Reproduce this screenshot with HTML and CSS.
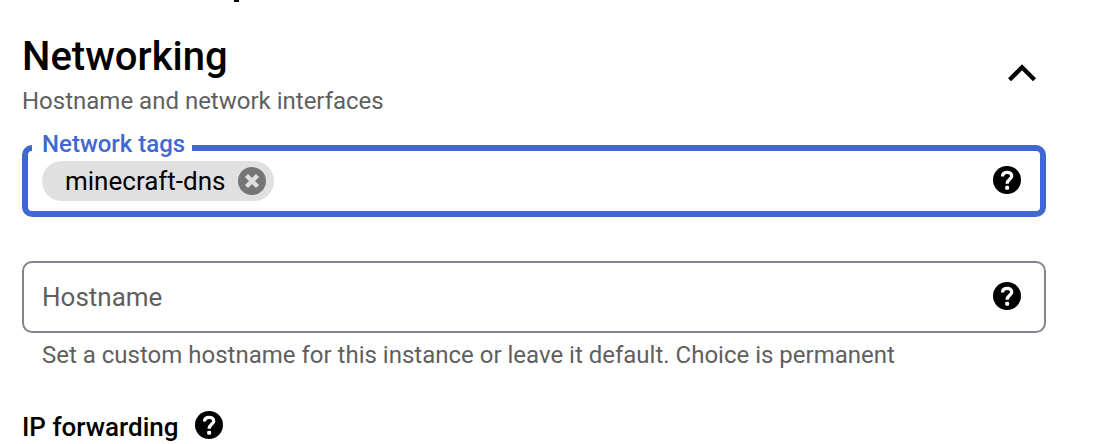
FILE: index.html
```html
<!DOCTYPE html>
<html lang="en">
<head>
<meta charset="utf-8">
<title>Networking</title>
<link rel="stylesheet" href="styles.css">
</head>
<body>
<svg class="symbols" aria-hidden="true">
  <symbol id="help" viewBox="0 0 28 28">
    <circle cx="14" cy="14" r="14" fill="#000"/>
    <path d="M9.5 10.4C9.5 7.8 11.4 6.3 14.1 6.3C16.8 6.3 18.7 7.8 18.7 10.2C18.7 13.3 14.1 13.6 14.1 17.8" fill="none" stroke="#fff" stroke-width="3.3"/>
    <rect x="12.2" y="19.8" width="3.9" height="4" rx="1.4" fill="#fff"/>
  </symbol>
</svg>
<main class="panel">
  <div class="previous"></div>
  <header class="section-header">
    <div>
      <h2 class="title">Networking</h2>
      <p class="subtitle">Hostname and network interfaces</p>
    </div>
    <button class="icon-button" type="button" aria-label="Collapse Networking">
      <svg class="chevron" viewBox="0 0 28 18"><path d="M1.5 15.8L14 3.3L26.5 15.8" fill="none" stroke="#000" stroke-width="4.4"/></svg>
    </button>
  </header>

  <div class="field field-active">
    <label class="floating-label" for="tags">Network tags</label>
    <span class="chip">minecraft-dns
      <button class="icon-button" type="button" aria-label="Remove minecraft-dns">
        <svg class="icon" viewBox="0 0 28 28"><circle cx="14" cy="14" r="14" fill="#757575"/><path d="M8.5 8.5L19.5 19.5M19.5 8.5L8.5 19.5" stroke="#e0e0e0" stroke-width="4.4"/></svg>
      </button>
    </span>
    <input class="input" id="tags" type="text">
    <button class="icon-button field-help" type="button" aria-label="Help for network tags"><svg class="icon"><use href="#help"/></svg></button>
  </div>

  <div class="field">
    <input class="input" id="hostname" type="text" placeholder="Hostname" aria-label="Hostname" aria-describedby="hostname-hint">
    <button class="icon-button field-help" type="button" aria-label="Help for hostname"><svg class="icon"><use href="#help"/></svg></button>
  </div>
  <p class="hint" id="hostname-hint">Set a custom hostname for this instance or leave it default. Choice is permanent</p>

  <div class="forwarding">
    <h3 class="subheading">IP forwarding</h3>
    <button class="icon-button" type="button" aria-label="Help for IP forwarding"><svg class="icon"><use href="#help"/></svg></button>
  </div>
</main>
</body>
</html>
```
FILE: styles.css
```css
* { box-sizing: border-box; }
body {
  margin: 0;
  background: #fff;
  color: #000;
  font-family: Roboto, "Liberation Sans", sans-serif;
  font-size: 26px;
  line-height: 32px;
}
h2, h3, p { margin: 0; }
.symbols { display: none; }
.panel { padding: 0 58px 0 22px; }
.previous {
  width: 5px;
  height: 2px;
  margin-left: 212px;
  background: #000;
}
.section-header {
  display: flex;
  justify-content: space-between;
  align-items: center;
  padding: 31px 10px 0 0;
}
.title {
  font-size: 40px;
  font-weight: 500;
  line-height: 48px;
}
.subtitle, .hint {
  color: #5f5f5f;
  font-size: 24px;
}
.subtitle { padding-top: 4px; }
.icon-button {
  display: flex;
  flex: none;
  padding: 0;
  border: 0;
  background: none;
  cursor: pointer;
}
.section-header .icon-button { padding-bottom: 4px; }
.icon { width: 28px; height: 28px; }
.chevron { width: 28px; height: 18px; }
.field {
  position: relative;
  display: flex;
  align-items: center;
  height: 72px;
  margin-top: 44px;
  padding: 0 23px 0 18px;
  border: 2px solid #80868b;
  border-radius: 10px;
}
.field-active {
  margin-top: 28px;
  padding: 0 19px 0 14px;
  border: 6px solid #4068d0;
}
.field-help { padding-bottom: 2px; }
.floating-label {
  position: absolute;
  top: -21px;
  left: 4px;
  padding: 0 7px 0 10px;
  background: #fff;
  color: #4068d0;
  font-size: 24px;
  font-weight: 500;
  line-height: 28px;
}
.chip {
  display: flex;
  align-items: center;
  gap: 12px;
  height: 40px;
  padding: 0 8px 0 23px;
  border-radius: 20px;
  background: #e0e0e0;
}
.input {
  flex: 1;
  min-width: 0;
  padding: 0;
  border: 0;
  outline: 0;
  background: none;
  color: #000;
  font: inherit;
}
.input::placeholder { color: #5f5f5f; opacity: 1; }
.hint { padding: 6px 20px 0; }
.forwarding {
  display: flex;
  align-items: center;
  gap: 16px;
  margin-top: 38px;
}
.subheading {
  padding-top: 2px;
  font-size: 26px;
  font-weight: 500;
}
.forwarding .icon-button { padding-bottom: 2px; }
```
